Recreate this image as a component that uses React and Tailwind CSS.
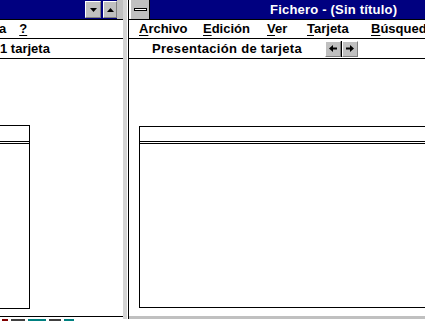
import React from 'react';

const font = { fontFamily: '"Liberation Sans", Arial, sans-serif' };

// Small grey Win 3.1 button with a glyph
const Btn = ({ children, className = '' }) => (
    <div className={`flex items-center justify-center shrink-0 bg-[#c0c0c0] border border-t-white border-l-white border-r-[#808080] border-b-[#808080] text-black ${className}`}>
        {children}
    </div>
);

const Tri = ({ up }) => (
    <svg width="7" height="4" viewBox="0 0 7 4">
        <path d={up ? 'M0 4 L3.5 0 L7 4 Z' : 'M0 0 L3.5 4 L7 0 Z'} fill="#000" />
    </svg>
);

const Arrow = ({ left }) => (
    <svg width="8" height="7" viewBox="0 0 8 7">
        {left ? (
            <path d="M0 3.5 L4 0 L4 2.5 L8 2.5 L8 4.5 L4 4.5 L4 7 Z" fill="#000" />
        ) : (
            <path d="M8 3.5 L4 0 L4 2.5 L0 2.5 L0 4.5 L4 4.5 L4 7 Z" fill="#000" />
        )}
    </svg>
);

const U = ({ children }) => <span className="underline underline-offset-2">{children}</span>;

const LeftWindow = () => (
    <div className="w-[123px] h-[317px] flex flex-col border-b border-black shrink-0">
        {/* title bar */}
        <div className="h-[20px] bg-[#000080] border-b border-black flex items-stretch justify-end">
            <Btn className="w-[16px] h-[17px] mt-[1px]"><Tri /></Btn>
            <div className="w-[2px]" />
            <Btn className="w-[14px] h-[17px] mt-[1px]"><Tri up /></Btn>
            <div className="w-[6px] bg-[#c0c0c0]" />
        </div>
        {/* menu */}
        <div className="h-[19px] border-b border-black flex items-center text-[13px] font-bold text-black gap-[13px] -ml-[1px]">
            <span>a</span>
            <span><U>?</U></span>
        </div>
        {/* status line */}
        <div className="h-[20px] border-b border-black flex items-center text-[13px] font-bold text-black">
            <span>1 tarjeta</span>
        </div>
        {/* body */}
        <div className="flex-1 bg-white pt-[66px] pb-[7px] flex">
            <div className="w-[30px] border-t border-r border-b border-black flex flex-col">
                <div className="h-[16px] border-b border-black" />
                <div className="h-[1px]" />
                <div className="flex-1 border-t border-black" />
            </div>
        </div>
    </div>
);

const RightWindow = () => (
    <div className="flex-1 h-[319px] flex flex-col border-l border-black min-w-0">
        {/* title bar */}
        <div className="h-[20px] border-b border-black flex items-stretch">
            <div className="w-[2px] bg-white shrink-0" />
            <div className="w-[19px] shrink-0 bg-[#c0c0c0] border-r border-black flex items-center justify-center">
                <div className="w-[13px] h-[3px] bg-white border border-black" />
            </div>
            <div className="flex-1 bg-[#000080] text-white text-[13px] font-bold flex items-center pl-[120px] whitespace-nowrap tracking-[0.2px]">
                Fichero - (Sin título)
            </div>
        </div>
        {/* menu */}
        <div className="h-[19px] border-b border-black flex items-center text-[13px] font-bold text-black pl-[10px] whitespace-nowrap">
            <span className="w-[64px] shrink-0"><U>A</U>rchivo</span>
            <span className="w-[64px] shrink-0"><U>E</U>dición</span>
            <span className="w-[40px] shrink-0"><U>V</U>er</span>
            <span className="w-[64px] shrink-0"><U>T</U>arjeta</span>
            <span className="shrink-0"><U>B</U>úsqueda</span>
        </div>
        {/* toolbar */}
        <div className="h-[20px] border-b border-black flex items-center text-[13px] font-bold text-black whitespace-nowrap">
            <span className="ml-[23px] w-[173px] shrink-0 tracking-[0.3px]">Presentación de tarjeta</span>
            <Btn className="w-[16px] h-[16px]"><Arrow left /></Btn>
            <div className="w-[1px] h-[16px] bg-black shrink-0" />
            <Btn className="w-[16px] h-[16px]"><Arrow /></Btn>
        </div>
        {/* body */}
        <div className="flex-1 bg-white pt-[67px] pb-[8px] pl-[10px] flex">
            <div className="flex-1 border-t border-l border-b border-black flex flex-col">
                <div className="h-[15px] border-b border-black" />
                <div className="h-[1px]" />
                <div className="flex-1 border-t border-black" />
            </div>
        </div>
        <div className="h-[3px] bg-[#c0c0c0]" />
    </div>
);

const App = () => {
    return (
        <div className="w-[425px] h-[321px] overflow-hidden bg-white flex flex-col" style={font}>
            <div className="flex items-start">
                <LeftWindow />
                <div className="w-[4px] h-[319px] bg-[#d4d4d4] shrink-0" />
                <div className="w-[1px] h-[319px] bg-white shrink-0" />
                <RightWindow />
            </div>
            {/* bits of desktop peeking out below */}
            <div className="flex items-center gap-[3px] h-[2px] pl-[2px]">
                <div className="w-[6px] h-[2px] bg-[#800000]" />
                <div className="w-[14px] h-[2px] bg-[#404040]" />
                <div className="w-[18px] h-[2px] bg-[#008080]" />
                <div className="w-[12px] h-[2px] bg-[#404040]" />
                <div className="w-[10px] h-[2px] bg-[#008080]" />
            </div>
        </div>
    );
};

export default App;
